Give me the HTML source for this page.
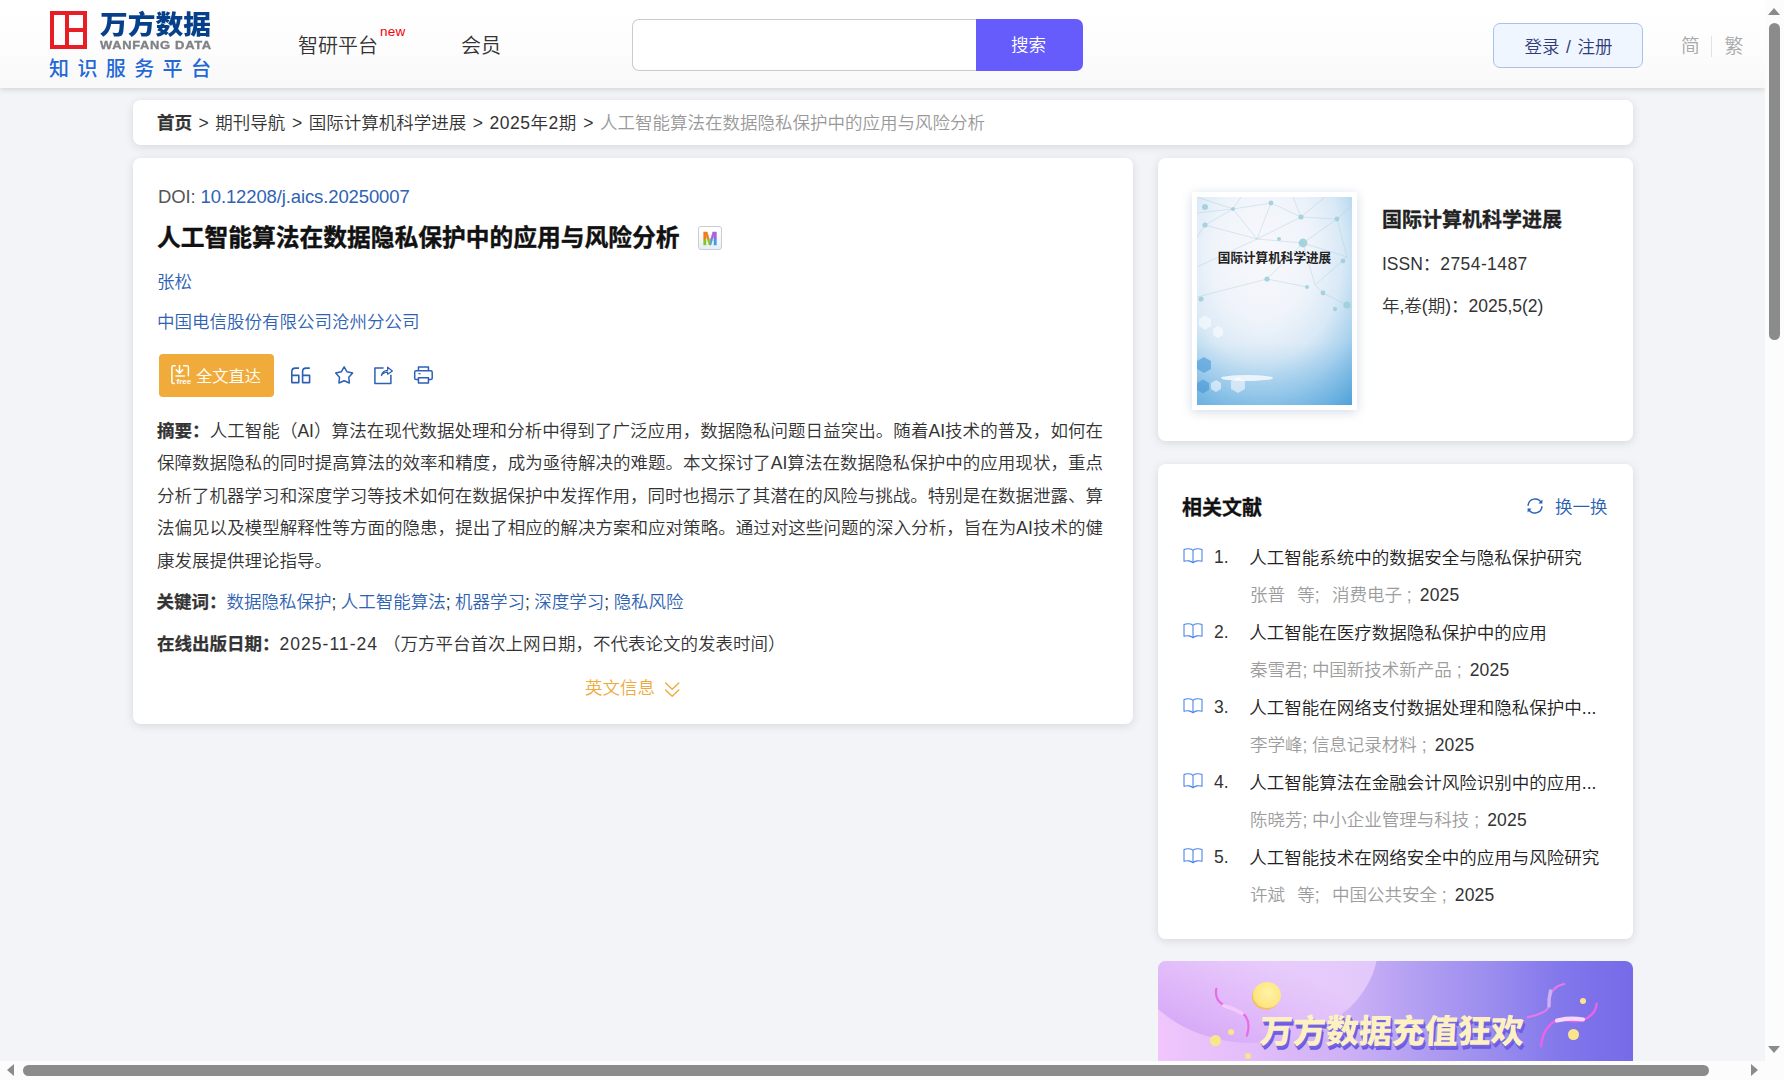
<!DOCTYPE html>
<html lang="zh-CN">
<head>
<meta charset="utf-8">
<title>人工智能算法在数据隐私保护中的应用与风险分析</title>
<style>
*{box-sizing:border-box;margin:0;padding:0}
html,body{width:1784px;height:1080px;overflow:hidden}
body{font-family:"Liberation Sans","Noto Sans CJK SC",sans-serif;font-size:17.5px;font-weight:350;color:#333;background:#fcfcfc;position:relative}
a{text-decoration:none;color:inherit}
#view{position:absolute;left:0;top:0;width:1765px;height:1061px;overflow:hidden;background:#f2f4f8}
/* header */
#hd{position:absolute;left:0;top:0;width:1765px;height:88px;background:linear-gradient(#ffffff,#fdfdfd 50%,#f8f8f9);box-shadow:0 1px 6px rgba(0,0,0,.16)}
.abs{position:absolute;white-space:nowrap}
/* cards */
.card{position:absolute;background:#fff;border-radius:7.5px;box-shadow:0 2px 10px rgba(0,0,0,.115)}
.blue{color:#2f62b2}
b,.b{font-weight:700;-webkit-text-stroke:.25px currentColor}
.ln{position:absolute;white-space:nowrap;line-height:30px}
.jl{position:absolute;left:24px;width:946px;height:30px;line-height:30px;white-space:nowrap;text-align:justify;text-align-last:justify;color:#333}
i.g1,i.g2,i.g3,i.g4{display:inline-block}
i.g1{width:12.3px}i.g2{width:4.8px}i.g3{width:4.5px}i.g4{width:8.2px}
.mg{background:linear-gradient(#f47a16 45%,#86c423 55%) left/50% 100% no-repeat,linear-gradient(#a85fd8 40%,#3f9ce6 60%) right/50% 100% no-repeat;-webkit-background-clip:text;background-clip:text;color:transparent}
/* scrollbars */
.thumb{position:absolute;background:#8b8b8b;border-radius:6px}
.tri{position:absolute;width:0;height:0}
</style>
</head>
<body>
<div id="view">
  <div id="hd">
    <!-- logo -->
    <div class="abs" style="left:50px;top:11px;width:37px;height:38px;border:4.4px solid #e71e25"></div>
    <div class="abs" style="left:65px;top:11px;width:4px;height:38px;background:#e71e25"></div>
    <div class="abs" style="left:68px;top:28px;width:16px;height:4.4px;background:#e71e25"></div>
    <div class="abs" id="lg1" style="left:100px;top:2.5px;font-family:'Noto Sans CJK SC',sans-serif;font-weight:900;font-size:26px;color:#07408a;line-height:40px;transform:scaleX(1.067);transform-origin:0 0">万方数据</div>
    <div class="abs" id="lg2" style="left:100px;top:38px;font-weight:700;font-size:11.4px;color:#808285;-webkit-text-stroke:.35px #808285;letter-spacing:.6px;line-height:14px;transform:scaleX(1.135);transform-origin:0 0">WANFANG DATA</div>
    <div class="abs" id="lg3" style="left:49px;top:54px;font-size:20px;font-weight:500;color:#2468d6;letter-spacing:8.4px;line-height:30px">知识服务平台</div>
    <!-- nav -->
    <div class="abs" id="nv1" style="left:298px;top:31px;font-size:20px;color:#333;line-height:30px">智研平台</div>
    <div class="abs" id="nvn" style="left:380px;top:24px;font-size:13.5px;color:#f80008;line-height:16px;letter-spacing:.2px">new</div>
    <div class="abs" id="nv2" style="left:461px;top:31px;font-size:20px;color:#333;line-height:30px">会员</div>
    <!-- search -->
    <div class="abs" style="left:632px;top:19px;width:345px;height:52px;border:1px solid #cbcbcb;border-right:0;border-radius:7px 0 0 7px;background:#fff"></div>
    <div class="abs" id="sbtn" style="left:976px;top:19px;width:107px;height:52px;border-radius:0 7px 7px 0;background:#665cfc;color:#fff;font-size:17.5px;text-align:center;line-height:53px;padding-right:2px">搜索</div>
    <!-- login -->
    <div class="abs" id="login" style="left:1493px;top:23px;width:150px;height:45px;border:1px solid #a9c1ec;border-radius:7px;background:#f0f6ff;color:#303d78;font-size:17.5px;text-align:center;line-height:46px;word-spacing:1.7px;padding-left:1px">登录 / 注册</div>
    <div class="abs" id="jian" style="left:1681px;top:33.5px;font-size:18.75px;color:#a8a8a8;line-height:26px">简</div>
    <div class="abs" style="left:1711px;top:36px;width:1px;height:21px;background:#e2e2e2"></div>
    <div class="abs" id="fan" style="left:1724.5px;top:33.5px;font-size:18.75px;color:#a8a8a8;line-height:26px">繁</div>
  </div>
  <!-- breadcrumb -->
  <div class="card" id="bc" style="left:133px;top:100px;width:1500px;height:45px;line-height:45px;padding-left:24px;font-size:17.5px;color:#333;white-space:nowrap;word-spacing:1.7px;line-height:46px"><b>首页</b> &gt; 期刊导航 &gt; 国际计算机科学进展 &gt; <span style="letter-spacing:.5px">2025年2期</span> &gt; <span style="color:#999">人工智能算法在数据隐私保护中的应用与风险分析</span></div>
  <!-- main card -->
  <div class="card" id="main" style="left:133px;top:158px;width:1000px;height:566px">
    <div class="ln" id="doi" style="left:25px;top:24px;font-size:18.5px;letter-spacing:-.12px"><span style="color:#555">DOI: </span><span class="blue">10.12208/j.aics.20250007</span></div>
    <div class="ln" id="ttl" style="left:24px;top:62px;font-size:23.75px;font-weight:700;color:#111;line-height:36px;-webkit-text-stroke:.4px #111">人工智能算法在数据隐私保护中的应用与风险分析</div>
    <div class="abs" id="mico" style="left:565px;top:68px;width:24px;height:24px;border:1.4px solid #cbccd0;border-radius:3px;background:linear-gradient(#fff 20%,#e6eefa);text-align:center;line-height:24px;font-size:18px;font-weight:700"><span class="mg" style="display:inline-block;-webkit-text-stroke:.5px transparent">M</span></div>
    <div class="ln blue" id="au" style="left:24px;top:109px">张松</div>
    <div class="ln blue" id="aff" style="left:24px;top:149px">中国电信股份有限公司沧州分公司</div>
    <div class="abs" id="fbtn" style="left:26px;top:196px;width:115px;height:43px;border-radius:4px;background:#f0ab3b"></div>
    <div class="ln" id="fbt" style="left:63px;top:203px;color:#fff;font-size:16.25px">全文直达</div>
    <div class="jl" id="ab1" style="top:258px"><b>摘要：</b>人工智能（AI）算法在现代数据处理和分析中得到了广泛应用，数据隐私问题日益突出。随着AI技术的普及，如何在</div>
    <div class="jl" id="ab2" style="top:290px">保障数据隐私的同时提高算法的效率和精度，成为亟待解决的难题。本文探讨了AI算法在数据隐私保护中的应用现状，重点</div>
    <div class="jl" id="ab3" style="top:322.5px">分析了机器学习和深度学习等技术如何在数据保护中发挥作用，同时也揭示了其潜在的风险与挑战。特别是在数据泄露、算</div>
    <div class="jl" id="ab4" style="top:355px">法偏见以及模型解释性等方面的隐患，提出了相应的解决方案和应对策略。通过对这些问题的深入分析，旨在为AI技术的健</div>
    <div class="ln" id="ab5" style="left:24px;top:388px;color:#333">康发展提供理论指导。</div>
    <div class="ln" id="kw" style="left:23.5px;top:429px;color:#333;word-spacing:-.45px"><b>关键词：</b><span class="blue">数据隐私保护</span>; <span class="blue">人工智能算法</span>; <span class="blue">机器学习</span>; <span class="blue">深度学习</span>; <span class="blue">隐私风险</span></div>
    <div class="ln" id="dt" style="left:24px;top:470.5px;color:#333"><b>在线出版日期：</b><span style="letter-spacing:1.03px">2025-11-24</span> （万方平台首次上网日期，不代表论文的发表时间）</div>
    <div class="ln" id="en" style="left:452px;top:515px;color:#eeaa3c">英文信息</div>
    <svg class="abs" id="ic-free" style="left:36px;top:205px" width="24" height="24" viewBox="0 0 24 24" fill="none" stroke="#fff" stroke-width="1.5" stroke-linecap="round" stroke-linejoin="round">
      <path d="M6.2 2.7H4.4Q2.9 2.7 2.9 4.2V19Q2.9 20.5 4.4 20.5H5.2"/>
      <path d="M14.6 2.7H17.9Q19.4 2.7 19.4 4.2V12.8"/>
      <path d="M10.5 2.6V9.6M7.3 6.9L10.5 10.1L13.7 6.9"/>
      <path d="M7 13H15.4"/>
      <text x="7.6" y="21.3" font-family="Liberation Sans, sans-serif" font-size="8" font-weight="700" fill="#fff" stroke="none" letter-spacing="0">free</text>
    </svg>
    <svg class="abs" id="ic-quote" style="left:156px;top:207px" width="24" height="22" viewBox="0 0 24 22" fill="none" stroke="#2c60b6" stroke-width="1.6" stroke-linejoin="round">
      <path d="M10 3.1H6.3Q2.8 3.1 2.8 6.6V17.6H9.8V10.4H2.8"/>
      <path d="M20.8 3.1H17.1Q13.6 3.1 13.6 6.6V17.6H20.6V10.4H13.6"/>
    </svg>
    <svg class="abs" id="ic-star" style="left:200px;top:206px" width="22" height="22" viewBox="0 0 22 22" fill="none" stroke="#2c60b6" stroke-width="1.5" stroke-linejoin="round">
      <path d="M11.15 2.90L14.03 7.84L19.61 9.05L15.81 13.31L16.38 19.00L11.15 16.70L5.92 19.00L6.49 13.31L2.69 9.05L8.27 7.84Z"/>
    </svg>
    <svg class="abs" id="ic-share" style="left:239px;top:206px" width="24" height="22" viewBox="0 0 24 22" fill="none" stroke="#2c60b6" stroke-width="1.5" stroke-linejoin="round" stroke-linecap="butt">
      <path d="M11.6 3.9H2.9V19.4H18.9V10.8"/>
      <path d="M9.3 11.6Q10.6 6.6 15.6 6.4V3.2L20.4 7L15.6 10.2V8.2Q11.6 8.3 9.3 11.6Z" stroke-width="1.2"/>
    </svg>
    <svg class="abs" id="ic-print" style="left:279px;top:206px" width="24" height="22" viewBox="0 0 24 22" fill="none" stroke="#2c60b6" stroke-width="1.5" stroke-linejoin="round">
      <path d="M6.45 6.6V2.95H16.45V6.6"/>
      <path d="M6.2 15.55H4.1Q2.7 15.55 2.7 14.15V8.15Q2.7 6.75 4.1 6.75H18.8Q20.2 6.75 20.2 8.15V14.15Q20.2 15.55 18.8 15.55H16.7"/>
      <path d="M6.45 13.85H16.45V19.05H6.45Z"/>
      <path d="M6.4 9.7H8.6" stroke-width="1.2"/>
    </svg>
    <svg class="abs" id="ic-chev" style="left:530px;top:522px" width="18" height="18" viewBox="0 0 18 18" fill="none" stroke="#efaa3b" stroke-width="1.4" stroke-linecap="round" stroke-linejoin="round">
      <path d="M2.6 2.9L9.2 9.2L15.8 2.9M2.6 9.9L9.2 16.2L15.8 9.9"/>
    </svg>
  </div>
  <!-- journal card -->
  <div class="card" id="jc" style="left:1158px;top:158px;width:475px;height:283px">
    <div class="abs" id="cov" style="left:34px;top:34px;width:165px;height:218px;background:#fff;box-shadow:0 2px 10px rgba(60,90,140,.22)">
      <svg style="position:absolute;left:5px;top:5px" width="155" height="208" viewBox="0 0 155 208">
        <defs>
          <radialGradient id="cg" cx=".42" cy=".27" r=".93"><stop offset="0" stop-color="#f8f8fc"/><stop offset=".34" stop-color="#f0f4fa"/><stop offset=".56" stop-color="#d9e9f6"/><stop offset=".74" stop-color="#aad2ee"/><stop offset=".9" stop-color="#74b6e2"/><stop offset="1" stop-color="#4a9dd8"/></radialGradient>
          <linearGradient id="cg3" x1="0" y1="0" x2="0" y2="1"><stop offset=".7" stop-color="#5aa8dc" stop-opacity="0"/><stop offset="1" stop-color="#5aa8dc" stop-opacity=".35"/></linearGradient>
        </defs>
        <rect width="155" height="208" fill="url(#cg)"/>
        <rect width="155" height="208" fill="url(#cg3)"/>
        <g stroke="#a9d0dc" stroke-width=".7" fill="none" opacity=".6">
          <path d="M0 16L36 12L74 6L104 20L140 22L155 8M36 12L8 28L0 40M36 12L60 42L104 20L128 0M74 6L60 42L106 46L140 22L150 60L106 46L118 88L150 60M8 28L60 42L0 70M106 46L70 82L0 100M118 88L126 96L150 108M70 82L110 90M0 0L36 12L44 0M104 20L96 0"/>
        </g>
        <g fill="#9fd0dc" opacity=".9">
          <circle cx="8" cy="10" r="3"/><circle cx="36" cy="12" r="2"/><circle cx="74" cy="6" r="2.4"/><circle cx="104" cy="20" r="2.6"/><circle cx="140" cy="22" r="2.4"/><circle cx="8" cy="28" r="2.6"/><circle cx="82" cy="42" r="2"/><circle cx="106" cy="46" r="4.4"/><circle cx="70" cy="82" r="2.6"/><circle cx="110" cy="90" r="2"/><circle cx="126" cy="96" r="2.4"/><circle cx="150" cy="108" r="3.6"/><circle cx="4" cy="102" r="2.6"/><circle cx="138" cy="112" r="2.2"/><circle cx="146" cy="64" r="2.4"/>
        </g>
        <g fill="#fff" opacity=".55">
          <path d="M2 122l6-3.5 6 3.5v7l-6 3.5-6-3.500z"/><path d="M16 132l5-3 5 3v6l-5 3-5-3z"/><path d="M34 184l7-4 7 4v8l-7 4-7-4z"/><path d="M14 186l5-3 5 3v6l-5 3-5-3z"/>
        </g>
        <g fill="#3f93d6" opacity=".55">
          <path d="M0 164l7-4 7 4v8l-7 4-7-4z"/><path d="M0 186l6-3.500 6 3.500v7l-6 3.500-6-3.500z"/>
        </g>
        <ellipse cx="50" cy="181" rx="26" ry="3" fill="#fff" opacity=".75"/>
        <text x="77.500" y="65" text-anchor="middle" font-family="Liberation Sans, Noto Sans CJK SC, sans-serif" font-weight="700" font-size="12.600" fill="#222">国际计算机科学进展</text>
      </svg>
    </div>
    <div class="ln" id="jn" style="left:224px;top:47px;font-size:20px;font-weight:700;color:#222;-webkit-text-stroke:.3px #222">国际计算机科学进展</div>
    <div class="ln" id="issn" style="left:224px;top:90.5px;font-size:17.5px;color:#333">ISSN：<span style="letter-spacing:.4px">2754-1487</span></div>
    <div class="ln" id="yv" style="left:224px;top:132.5px;font-size:17.5px;color:#333">年,卷(期)：2025,5(2)</div>
  </div>
  <!-- related -->
  <div class="card" id="rel" style="left:1158px;top:464px;width:475px;height:475px">
    <div class="ln" id="rh" style="left:24px;top:29px;font-size:20px;font-weight:700;color:#111;-webkit-text-stroke:.3px #111">相关文献</div>
    <svg class="abs" id="ic-ref" style="left:367px;top:32.4px" width="20" height="20" viewBox="0 0 20 20" fill="none" stroke="#2c60b6" stroke-width="1.4" stroke-linecap="round">
      <path d="M3.100 9.200A7.100 7.100 0 0 1 16.200 6.400M16.900 10.800A7.100 7.100 0 0 1 3.800 13.600"/>
      <path d="M17.400 3.400V7.400H13.400Z M2.600 16.600V12.600H6.600Z" fill="#2c60b6" stroke="none"/>
    </svg>
    <div class="ln" id="hyh" style="left:397px;top:28px;color:#2c5fb0">换一换</div>
<svg class="abs" style="left:24.3px;top:82.85px" width="22" height="18" viewBox="0 0 22 18" fill="none" stroke="#4a86e8" stroke-width="1.08" stroke-linejoin="round"><path d="M11 3.300C9.400 1.600 5 1.200 2 2.600V14.300C5 13.200 9.200 13.800 11 15.800C12.800 13.800 17 13.200 20 14.300V2.600C17 1.200 12.600 1.600 11 3.300ZM11 3.300V15.200"/></svg>
    <div class="ln" style="left:56px;top:78px;color:#333">1.</div>
    <div class="ln rt" style="left:91.3px;top:78.7px;color:#222">人工智能系统中的数据安全与隐私保护研究</div>
    <div class="ln rm" style="left:92px;top:115.5px;color:#9d9d9d">张普<i class="g1"></i>等;<i class="g1"></i>消费电子<i class="g2"></i>;<i class="g4"></i><span style="color:#333;letter-spacing:.15px">2025</span></div>
<svg class="abs" style="left:24.3px;top:157.85px" width="22" height="18" viewBox="0 0 22 18" fill="none" stroke="#4a86e8" stroke-width="1.08" stroke-linejoin="round"><path d="M11 3.300C9.400 1.600 5 1.200 2 2.600V14.300C5 13.200 9.200 13.800 11 15.800C12.800 13.800 17 13.200 20 14.300V2.600C17 1.200 12.600 1.600 11 3.300ZM11 3.300V15.200"/></svg>
    <div class="ln" style="left:56px;top:153px;color:#333">2.</div>
    <div class="ln rt" style="left:91.3px;top:153.7px;color:#222">人工智能在医疗数据隐私保护中的应用</div>
    <div class="ln rm" style="left:92px;top:190.5px;color:#9d9d9d">秦雪君;<i class="g3"></i>中国新技术新产品<i class="g2"></i>;<i class="g4"></i><span style="color:#333;letter-spacing:.15px">2025</span></div>
<svg class="abs" style="left:24.3px;top:232.85px" width="22" height="18" viewBox="0 0 22 18" fill="none" stroke="#4a86e8" stroke-width="1.08" stroke-linejoin="round"><path d="M11 3.300C9.400 1.600 5 1.200 2 2.600V14.300C5 13.200 9.200 13.800 11 15.800C12.800 13.800 17 13.200 20 14.300V2.600C17 1.200 12.600 1.600 11 3.300ZM11 3.300V15.200"/></svg>
    <div class="ln" style="left:56px;top:228px;color:#333">3.</div>
    <div class="ln rt" style="left:91.3px;top:228.7px;color:#222">人工智能在网络支付数据处理和隐私保护中...</div>
    <div class="ln rm" style="left:92px;top:265.5px;color:#9d9d9d">李学峰;<i class="g3"></i>信息记录材料<i class="g2"></i>;<i class="g4"></i><span style="color:#333;letter-spacing:.15px">2025</span></div>
<svg class="abs" style="left:24.3px;top:307.85px" width="22" height="18" viewBox="0 0 22 18" fill="none" stroke="#4a86e8" stroke-width="1.08" stroke-linejoin="round"><path d="M11 3.300C9.400 1.600 5 1.200 2 2.600V14.300C5 13.200 9.200 13.800 11 15.800C12.800 13.800 17 13.200 20 14.300V2.600C17 1.200 12.600 1.600 11 3.300ZM11 3.300V15.200"/></svg>
    <div class="ln" style="left:56px;top:303px;color:#333">4.</div>
    <div class="ln rt" style="left:91.3px;top:303.7px;color:#222">人工智能算法在金融会计风险识别中的应用...</div>
    <div class="ln rm" style="left:92px;top:340.5px;color:#9d9d9d">陈晓芳;<i class="g3"></i>中小企业管理与科技<i class="g2"></i>;<i class="g4"></i><span style="color:#333;letter-spacing:.15px">2025</span></div>
<svg class="abs" style="left:24.3px;top:382.85px" width="22" height="18" viewBox="0 0 22 18" fill="none" stroke="#4a86e8" stroke-width="1.08" stroke-linejoin="round"><path d="M11 3.300C9.400 1.600 5 1.200 2 2.600V14.300C5 13.200 9.200 13.800 11 15.800C12.800 13.800 17 13.200 20 14.300V2.600C17 1.200 12.600 1.600 11 3.300ZM11 3.300V15.200"/></svg>
    <div class="ln" style="left:56px;top:378px;color:#333">5.</div>
    <div class="ln rt" style="left:91.3px;top:378.7px;color:#222">人工智能技术在网络安全中的应用与风险研究</div>
    <div class="ln rm" style="left:92px;top:415.5px;color:#9d9d9d">许斌<i class="g1"></i>等;<i class="g1"></i>中国公共安全<i class="g2"></i>;<i class="g4"></i><span style="color:#333;letter-spacing:.15px">2025</span></div>
  </div>
  <!-- banner -->
  <div class="abs" id="ban" style="left:1158px;top:961px;width:475px;height:120px;border-radius:8px;overflow:hidden;background:linear-gradient(90deg,#f0c6fc 0%,#e2bdf9 20%,#cdb0f6 40%,#b5a1f2 53%,#9b8def 70%,#8277eb 85%,#766ae8 100%)">
    <div class="abs" style="left:-30px;top:-112px;width:250px;height:194px;border-radius:50%;background:linear-gradient(205deg,rgba(234,208,252,.8) 52%,rgba(222,182,249,.95) 75%,rgba(209,162,246,1) 96%)"></div>
    <div class="abs" style="left:95px;top:21px;width:28px;height:26px;border-radius:50%;background:radial-gradient(circle at 55% 42%,#fff3a6,#fde682 62%,#f7d25c);box-shadow:-1px 1.500px 0 #f3c244"></div>
    <div class="abs" style="left:52.300px;top:74.400px;width:10.800px;height:10.800px;border-radius:50%;background:#fbe58c"></div>
    <div class="abs" style="left:70.300px;top:67.600px;width:6px;height:6px;border-radius:50%;background:#fbe58c"></div>
    <div class="abs" style="left:86.600px;top:92px;width:6px;height:6px;border-radius:50%;background:#fbe58c"></div>
    <div class="abs" style="left:410.300px;top:67.900px;width:10.800px;height:10.800px;border-radius:50%;background:#fbe58c"></div>
    <div class="abs" style="left:422px;top:36.800px;width:6.400px;height:6.400px;border-radius:50%;background:#fbe58c"></div>
    <svg class="abs" style="left:0;top:0" width="475" height="120" viewBox="0 0 475 120" fill="none" stroke-linecap="round">
      <path d="M58.300 27.800Q56.500 38 64 43Q76 47.500 86.800 54.300Q93 62 88.900 74.600" stroke="#ea6ae6" stroke-width="2.200"/>
      <path d="M66 44.500Q76 47.500 84 52.500" stroke="#f6d2fa" stroke-width="3.600" opacity=".9"/>
      <path d="M406.200 23Q392 26 391.300 40.700Q391 49 385.800 50.800Q378 55 369.500 56.300" stroke="#e57ae8" stroke-width="2"/>
      <path d="M392.500 30Q390.500 38 391 45" stroke="#cdb8f6" stroke-width="3.400" opacity=".9"/>
      <path d="M438.700 42.700Q438 52 429.200 57Q420 62 411.600 59.700Q402 57.500 395.300 61Q388 67 385.800 73.300Q383.500 79 383 85.500" stroke="#ee62e6" stroke-width="2.300"/>
      <path d="M399 59.500Q411 56.500 425 58.500" stroke="#fbdcfb" stroke-width="4.200" opacity=".95"/>
    </svg>
    <div class="abs" id="bt" style="left:102px;top:46px;font-family:'Noto Sans CJK SC',sans-serif;font-weight:900;font-size:33px;line-height:44px;color:#fdf1c4;text-shadow:1px 2px 0 #7564e2,2px 3.500px 0 #6a5be0;transform:skewX(-3deg);transform-origin:0 50%">万方数据充值狂欢</div>
  </div>
</div>
<!-- scrollbars -->
<div class="thumb" style="left:1769px;top:23px;width:11px;height:317px"></div>
<div class="tri" style="left:1767.6px;top:8px;border-left:6.9px solid transparent;border-right:6.9px solid transparent;border-bottom:7px solid #8b8b8b"></div>
<div class="tri" style="left:1767.6px;top:1046px;border-left:6.9px solid transparent;border-right:6.9px solid transparent;border-top:7px solid #8b8b8b"></div>
<div class="thumb" style="left:23px;top:1065px;width:1686px;height:11px"></div>
<div class="tri" style="left:7px;top:1064px;border-top:6.5px solid transparent;border-bottom:6.5px solid transparent;border-right:7px solid #8b8b8b"></div>
<div class="tri" style="left:1751px;top:1064px;border-top:6.5px solid transparent;border-bottom:6.5px solid transparent;border-left:7px solid #8b8b8b"></div>
</body>
</html>
